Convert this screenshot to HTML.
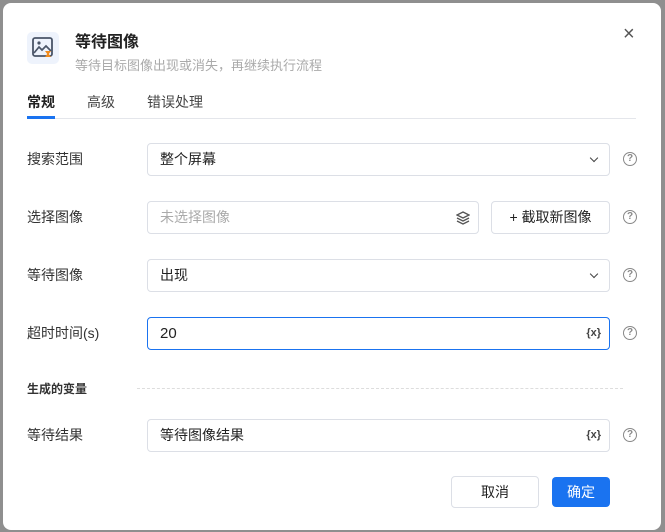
<!DOCTYPE html>
<html><head><meta charset="utf-8"><style>
*{box-sizing:border-box;margin:0;padding:0}
body{width:665px;height:532px;background:#8f8f8f;font-family:"Liberation Sans","Noto Sans CJK SC",sans-serif;position:relative;overflow:hidden}
.dlg{position:absolute;left:3px;top:3px;width:658px;height:527px;background:#fff;border-radius:8px}
.abs{position:absolute}
.lbl{position:absolute;left:24px;font-size:14px;color:#333}
.inp{position:absolute;left:144px;width:463px;height:33px;border:1px solid #dcdfe6;border-radius:4px;font-size:14px;color:#222;padding-left:12px;line-height:31px}
.q{position:absolute;left:620px;width:14px;height:14px;border:1.3px solid #888;border-radius:50%;font-size:10px;color:#888;text-align:center;line-height:12px;font-weight:bold}
.chev{position:absolute;right:12px;top:11px;width:6px;height:6px;border-right:1.4px solid #444;border-bottom:1.4px solid #444;transform:rotate(45deg)}
.x{position:absolute;right:8px;top:0;font-size:11px;color:#444;font-weight:bold}
</style></head><body>
<div class="dlg">
<div class="abs" style="left:24px;top:29px;width:32px;height:32px;background:#eef3fc;border-radius:5px">
<svg width="32" height="32" viewBox="0 0 32 32"><rect x="6" y="6" width="19" height="18" rx="2" fill="none" stroke="#4a5568" stroke-width="1.8"/><path d="M7 21l5-6 3 3 4-4 5 5" fill="none" stroke="#4a5568" stroke-width="1.7"/><circle cx="12" cy="11" r="1.6" fill="#4a5568"/><path d="M18 19h6l-2.2 3 2.2 3h-6l2.2-3z" fill="#f08a1c"/></svg></div>
<div class="abs" style="left:72px;top:25px;font-size:16px;font-weight:bold;color:#222">等待图像</div>
<div class="abs" style="left:72px;top:52px;font-size:13px;color:#aaa">等待目标图像出现或消失，再继续执行流程</div>
<div class="abs" style="left:620px;top:21px;font-size:20px;color:#555;line-height:20px">×</div>
<div class="abs" style="left:24px;top:89px;font-size:14px;color:#222;font-weight:bold">常规</div>
<div class="abs" style="left:84px;top:89px;font-size:14px;color:#444">高级</div>
<div class="abs" style="left:144px;top:89px;font-size:14px;color:#444">错误处理</div>
<div class="abs" style="left:24px;top:115px;width:609px;height:1px;background:#e4e6eb"></div>
<div class="abs" style="left:24px;top:113px;width:28px;height:3px;background:#1a73f0"></div>

<div class="lbl" style="top:146px">搜索范围</div>
<div class="inp" style="top:140px">整个屏幕<span class="chev"></span></div>
<div class="q" style="top:149px">?</div>

<div class="lbl" style="top:204px">选择图像</div>
<div class="inp" style="top:198px;width:332px;color:#aaa">未选择图像
<svg class="abs" style="right:8px;top:9px" width="14" height="14" viewBox="0 0 14 14"><path d="M7 1l6 3-6 3-6-3z M1 7l6 3 6-3 M1 10l6 3 6-3" fill="none" stroke="#555" stroke-width="1.3"/></svg></div>
<div class="abs" style="left:488px;top:198px;width:119px;height:33px;border:1px solid #dcdfe6;border-radius:4px;font-size:14px;color:#222;text-align:center;line-height:31px">+ 截取新图像</div>
<div class="q" style="top:207px">?</div>

<div class="lbl" style="top:262px">等待图像</div>
<div class="inp" style="top:256px">出现<span class="chev"></span></div>
<div class="q" style="top:265px">?</div>

<div class="lbl" style="top:320px">超时时间(s)</div>
<div class="inp" style="top:314px;border-color:#1a73f0;font-size:15px">20<span class="x">{x}</span></div>
<div class="q" style="top:323px">?</div>

<div class="abs" style="left:24px;top:377px;font-size:12px;font-weight:bold;color:#333">生成的变量</div>
<div class="abs" style="left:134px;top:385px;width:486px;border-top:1px dashed #ddd"></div>

<div class="lbl" style="top:422px">等待结果</div>
<div class="inp" style="top:416px">等待图像结果<span class="x">{x}</span></div>
<div class="q" style="top:425px">?</div>

<div class="abs" style="left:448px;top:473px;width:88px;height:32px;border:1px solid #dcdfe6;border-radius:4px;text-align:center;line-height:30px;font-size:14px;color:#222">取消</div>
<div class="abs" style="left:549px;top:474px;width:58px;height:30px;background:#1a73f0;border-radius:4px;text-align:center;line-height:30px;font-size:14px;color:#fff">确定</div>
</div>
</body></html>
